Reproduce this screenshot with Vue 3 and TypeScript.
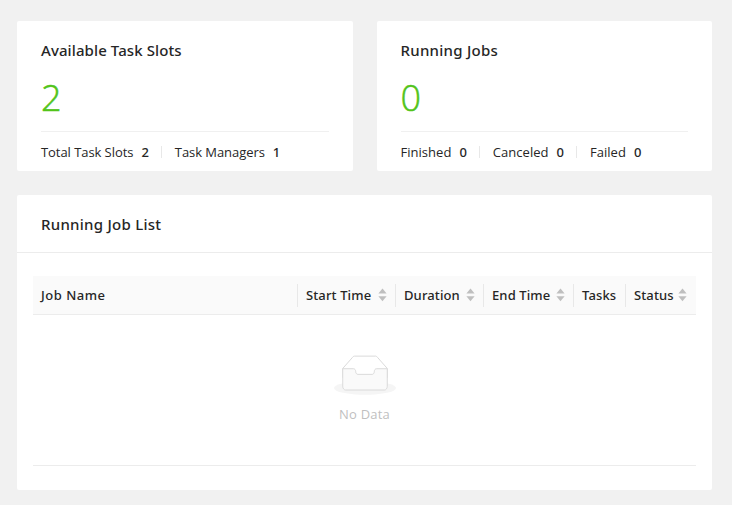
<script setup lang="ts">
interface Detail {
  label: string
  value: number
}

interface Stat {
  title: string
  total: number
  details: Detail[]
}

interface Column {
  label: string
  sortable: boolean
}

const stats: Stat[] = [
  {
    title: 'Available Task Slots',
    total: 2,
    details: [
      { label: 'Total Task Slots', value: 2 },
      { label: 'Task Managers', value: 1 },
    ],
  },
  {
    title: 'Running Jobs',
    total: 0,
    details: [
      { label: 'Finished', value: 0 },
      { label: 'Canceled', value: 0 },
      { label: 'Failed', value: 0 },
    ],
  },
]

const columns: Column[] = [
  { label: 'Job Name', sortable: false },
  { label: 'Start Time', sortable: true },
  { label: 'Duration', sortable: true },
  { label: 'End Time', sortable: true },
  { label: 'Tasks', sortable: false },
  { label: 'Status', sortable: true },
]
</script>

<template>
  <main class="overview">
    <section class="stats">
      <article v-for="stat in stats" :key="stat.title" class="card stat">
        <h2 class="title">{{ stat.title }}</h2>
        <div class="total">{{ stat.total }}</div>
        <div class="details">
          <div v-for="detail in stat.details" :key="detail.label" class="detail">
            <span class="label">{{ detail.label }}</span>
            <strong class="value">{{ detail.value }}</strong>
          </div>
        </div>
      </article>
    </section>

    <section class="card jobs">
      <header class="jobs-head">
        <h2 class="title title-wide">Running Job List</h2>
      </header>
      <div class="table">
        <div class="thead">
          <div v-for="column in columns" :key="column.label" class="th">
            <span>{{ column.label }}</span>
            <svg v-if="column.sortable" class="sorter" width="9" height="14" viewBox="0 0 9 14">
              <path d="M4.5 0.6 8.6 5.5H0.4z" />
              <path d="M4.5 13.2 8.6 8.3H0.4z" />
            </svg>
          </div>
        </div>
        <div class="empty">
          <svg width="62" height="40" viewBox="0 0 64 41">
            <g transform="translate(0 1)" fill="none">
              <ellipse fill="#f5f5f5" cx="32" cy="33" rx="32" ry="7" />
              <g stroke="#d9d9d9">
                <path d="M55 12.76L44.854 1.258C44.367.474 43.656 0 42.907 0H21.093c-.749 0-1.46.474-1.947 1.257L9 12.761V22h46v-9.24z" />
                <path fill="#fafafa" d="M41.613 15.931c0-1.605.994-2.93 2.227-2.931H55v18.137C55 33.26 53.68 35 52.05 35h-40.1C10.32 35 9 33.259 9 31.137V13h11.16c1.233 0 2.227 1.323 2.227 2.928v.022c0 1.605 1.005 2.901 2.237 2.901h14.752c1.232 0 2.237-1.308 2.237-2.913v-.007z" />
              </g>
            </g>
          </svg>
          <p class="empty-text">No Data</p>
        </div>
      </div>
    </section>
  </main>
</template>

<style>
body {
  background: #f1f1f1;
}
</style>

<style scoped>
.overview {
  box-sizing: border-box;
  height: 505px;
  padding: 21px 20px 15px 17px;
  display: flex;
  flex-direction: column;
  gap: 24px;
  background: #f1f1f1;
  color: #262626;
  font-family: 'Open Sans', 'Noto Sans', sans-serif;
  font-size: 13px;
  line-height: 22px;
}

.stats {
  display: grid;
  grid-template-columns: 1fr 1fr;
  gap: 24px;
}

.card {
  background: #fff;
  border-radius: 2px;
}

.stat {
  box-sizing: border-box;
  height: 150px;
  padding: 17px 24px 0;
}

.title {
  margin: 0;
  font-family: 'Noto Sans', 'Open Sans', sans-serif;
  font-size: 15px;
  font-weight: 500;
  line-height: 24px;
  letter-spacing: 0.1px;
}

.stat:last-child .title,
.title-wide {
  letter-spacing: 0.26px;
}

.total {
  height: 69px;
  line-height: 72px;
  font-size: 36px;
  font-weight: 300;
  color: #52c41a;
  -webkit-text-stroke: 0.5px #52c41a;
}

.details {
  display: flex;
  align-items: center;
  height: 40px;
  border-top: 1px solid #f0f0f0;
}

.detail {
  display: flex;
  align-items: center;
  gap: 8px;
}

.label {
  letter-spacing: -0.06px;
}

.stat:last-child .label {
  letter-spacing: 0.03px;
}

.detail + .detail::before {
  content: '';
  width: 1px;
  height: 12px;
  margin: 0 5px 0 12px;
  background: #e8e8e8;
}

.value {
  font-family: 'Noto Sans', 'Open Sans', sans-serif;
  font-weight: 500;
}

.jobs {
  height: 295px;
}

.jobs-head {
  box-sizing: border-box;
  height: 58px;
  padding: 17px 24px 0;
  border-bottom: 1px solid #ececec;
}

.table {
  margin: 23px 16px 0;
}

.thead {
  box-sizing: border-box;
  height: 39px;
  display: grid;
  grid-template-columns: 1fr 98px 88px 90px 52px 71px;
  align-items: center;
  background: #fafafa;
  border-bottom: 1px solid #ececec;
  font-family: 'Noto Sans', 'Open Sans', sans-serif;
  font-weight: 500;
  letter-spacing: 0.12px;
}

.th {
  box-sizing: border-box;
  height: 23px;
  display: flex;
  align-items: center;
  justify-content: space-between;
  padding: 0 8px;
  border-left: 1px solid #e8e8e8;
}

.th:first-child {
  border-left: 0;
  letter-spacing: 0.5px;
}

.th:last-child {
  padding-right: 9px;
}

.sorter {
  flex: none;
  fill: #bfbfbf;
}

.empty {
  box-sizing: border-box;
  height: 151px;
  padding-top: 40px;
  display: flex;
  flex-direction: column;
  align-items: center;
  border-bottom: 1px solid #ececec;
}

.empty-text {
  margin: 8px 0 0;
  color: #bfbfbf;
  letter-spacing: 0.2px;
}
</style>
